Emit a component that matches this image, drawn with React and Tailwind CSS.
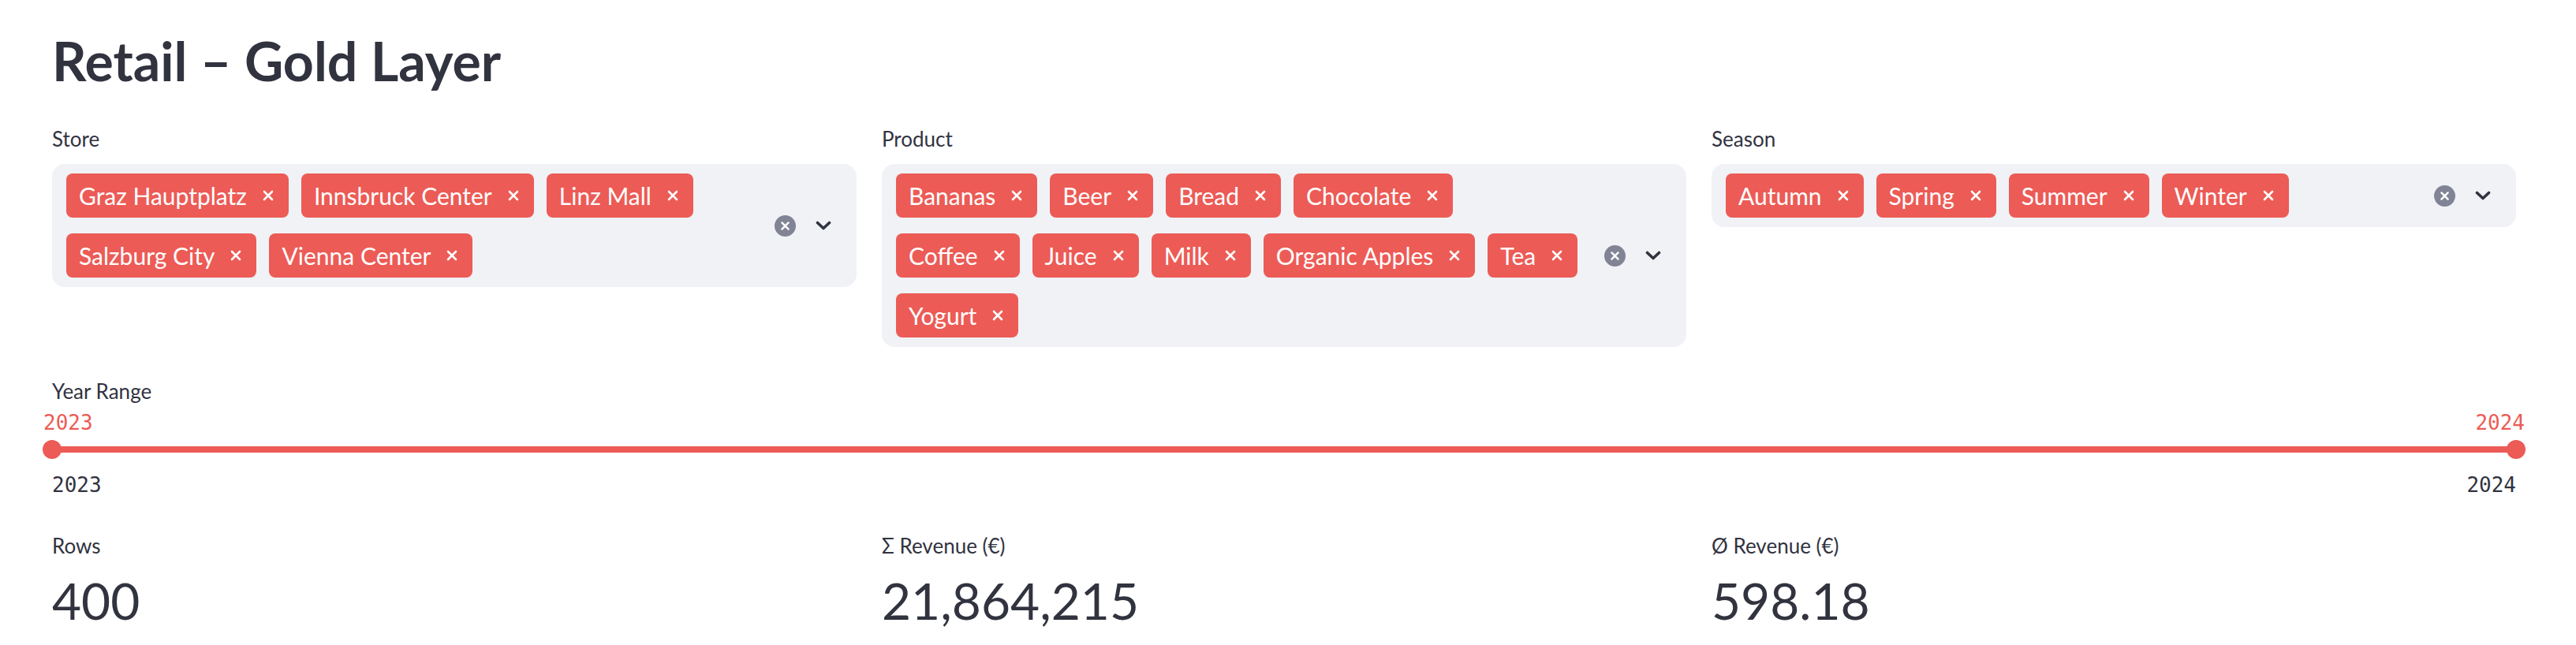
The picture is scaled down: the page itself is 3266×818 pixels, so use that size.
import React from "react";

function XIcon({ className, sw = 2.6 }) {
  return (
    <svg viewBox="0 0 16 16" className={className} fill="none" stroke="currentColor" strokeWidth={sw} strokeLinecap="round">
      <path d="M3 3L13 13M13 3L3 13" />
    </svg>
  );
}

function Chevron() {
  return (
    <svg viewBox="0 0 20 12" className="h-[12px] w-[20px] text-[#31333f]" fill="none" stroke="currentColor" strokeWidth="3.6" strokeLinecap="round" strokeLinejoin="round">
      <path d="M2.5 2.5L10 9.5L17.5 2.5" />
    </svg>
  );
}

function Tag({ label }) {
  return (
    <div className="flex h-[56px] items-center rounded-[8px] bg-[#ec5b56] pl-[16px] pr-[18px] text-white">
      <span className="text-[30px] leading-none">{label}</span>
      <XIcon className="ml-[19px] h-[16px] w-[16px]" />
    </div>
  );
}

function MultiSelect({ label, options }) {
  return (
    <div>
      <div className="text-[26px] leading-[36px] text-[#31333f]">{label}</div>
      <div className="mt-[14px] flex items-center rounded-[16px] bg-[#f0f2f6] py-[12px] pl-[18px] pr-[32px]">
        <div className="flex min-w-0 flex-1 flex-wrap gap-x-[16px] gap-y-[20px]">
          {options.map((o) => (
            <Tag key={o} label={o} />
          ))}
        </div>
        <div className="ml-[28px] flex items-center gap-[25px]">
          <div className="flex h-[27px] w-[27px] items-center justify-center rounded-full bg-[#808495] text-white">
            <XIcon className="h-[13px] w-[13px]" sw={3} />
          </div>
          <Chevron />
        </div>
      </div>
    </div>
  );
}

function Metric({ label, value }) {
  return (
    <div>
      <div className="text-[26px] leading-[36px] text-[#31333f]">{label}</div>
      <div className="mt-[12px] text-[64px] leading-[80px] text-[#31333f]">{value}</div>
    </div>
  );
}

export default function App() {
  return (
    <div className="min-h-[818px] w-full bg-white pl-[66px] pr-[76px] pt-[37px] text-[#31333f] [font-family:Lato,'Noto_Sans',sans-serif]">
      <h1 className="text-[68px] font-bold leading-[80px] text-[#31333f]">Retail – Gold Layer</h1>

      <div className="mt-[41px] grid grid-cols-3 items-start gap-x-[32px]">
        <MultiSelect
          label="Store"
          options={["Graz Hauptplatz", "Innsbruck Center", "Linz Mall", "Salzburg City", "Vienna Center"]}
        />
        <MultiSelect
          label="Product"
          options={["Bananas", "Beer", "Bread", "Chocolate", "Coffee", "Juice", "Milk", "Organic Apples", "Tea", "Yogurt"]}
        />
        <MultiSelect label="Season" options={["Autumn", "Spring", "Summer", "Winter"]} />
      </div>

      <div className="mt-[38px]">
        <div className="text-[26px] leading-[36px] text-[#31333f]">Year Range</div>
        <div className="-mx-[11px] mt-[7px] flex justify-between text-[26px] leading-[30px] text-[#ec5b56] [font-family:'DejaVu_Sans_Mono',monospace]">
          <span>2023</span>
          <span>2024</span>
        </div>
        <div className="relative mt-[15px] h-[8px] rounded-full bg-[#ec5b56]">
          <div className="absolute left-[-12px] top-[-8px] h-[24px] w-[24px] rounded-full bg-[#ec5b56]" />
          <div className="absolute right-[-12px] top-[-8px] h-[24px] w-[24px] rounded-full bg-[#ec5b56]" />
        </div>
        <div className="mt-[26px] flex justify-between text-[26px] leading-[30px] text-[#31333f] [font-family:'DejaVu_Sans_Mono',monospace]">
          <span>2023</span>
          <span>2024</span>
        </div>
      </div>

      <div className="mt-[44px] grid grid-cols-3 gap-x-[32px]">
        <Metric label="Rows" value="400" />
        <Metric label="Σ Revenue (€)" value="21,864,215" />
        <Metric label="Ø Revenue (€)" value="598.18" />
      </div>
    </div>
  );
}
